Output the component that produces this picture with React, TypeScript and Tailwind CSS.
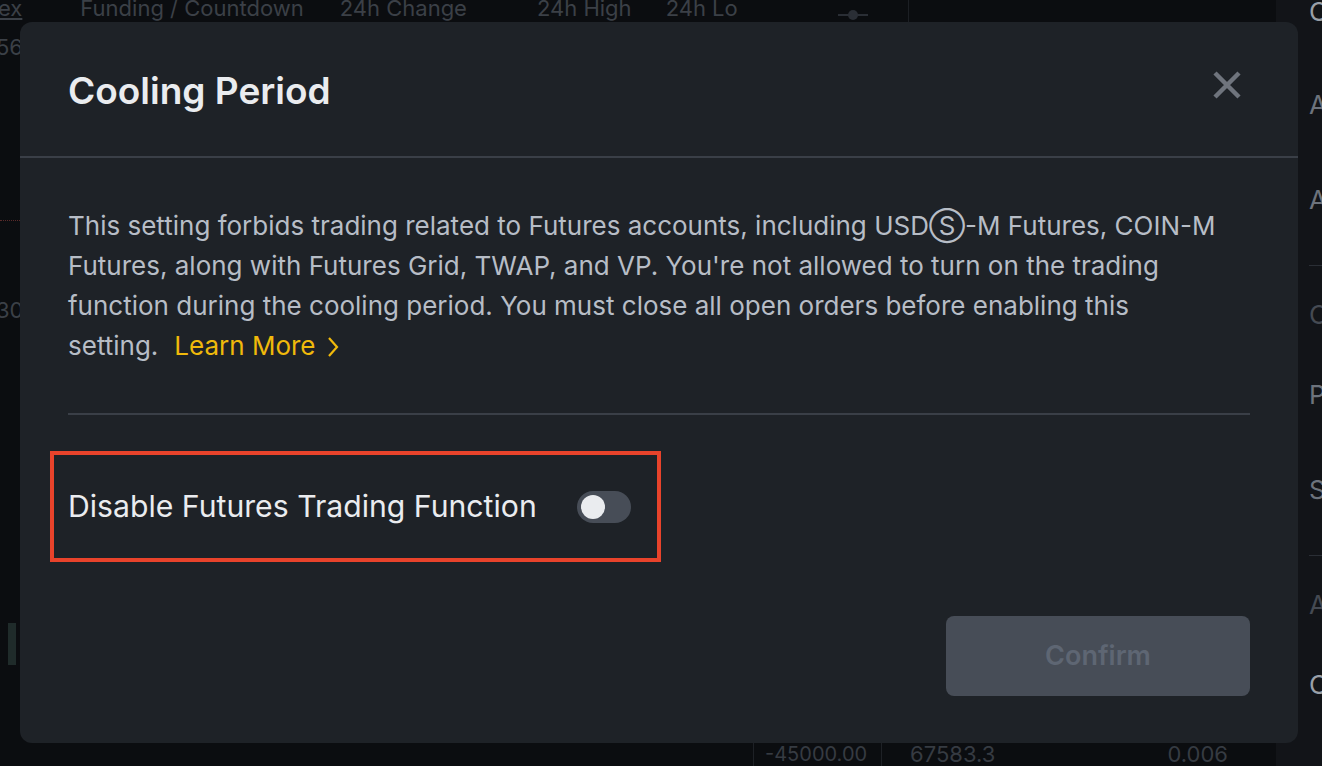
import React from "react";

const font = { fontFamily: "Inter, 'Noto Sans', sans-serif" };

const RightPanel = () => (
  <div className="w-[46px] h-full bg-[#121418] flex flex-col text-[26px] leading-[30px] pl-[33px] overflow-hidden shrink-0">
    <span className="mt-[-3px] text-[#9aa0a8]">C</span>
    <span className="mt-[63px] text-[#6d737c]">A</span>
    <span className="mt-[65px] text-[#6d737c]">A</span>
    <div className="mt-[50px] h-[1px] bg-[#2a2e35]" />
    <span className="mt-[34px] text-[#454a52]">O</span>
    <span className="mt-[50px] text-[#6d737c]">P</span>
    <span className="mt-[65px] text-[#6d737c]">S</span>
    <div className="mt-[50px] h-[1px] bg-[#2a2e35]" />
    <span className="mt-[34px] text-[#454a52]">A</span>
    <span className="mt-[50px] text-[#9aa0a8]">C</span>
  </div>
);

const Background = () => {
  return (
    <div className="flex w-full h-full bg-[#0b0d10] text-[#3b4047]" style={font}>
      <div className="flex flex-col flex-1 min-w-0">
        <div className="flex h-[22px] items-end text-[22px] leading-[22px] overflow-hidden shrink-0">
          <span className="underline -ml-[2px] mb-[3px]">ex</span>
          <span className="ml-[58px] mb-[3px]">Funding / Countdown</span>
          <span className="ml-[36px] mb-[3px]">24h Change</span>
          <span className="ml-[70px] mb-[3px]">24h High</span>
          <span className="ml-[34px] mb-[3px]">24h Lo</span>
          <div className="ml-[100px] w-[30px] h-[2px] bg-[#2a2e35] mb-[6px]" />
          <div className="ml-[-20px] w-[10px] h-[10px] rounded-full bg-[#2a2e35] mb-[2px]" />
          <div className="ml-[50px] w-[1px] h-[22px] bg-[#1c1f24]" />
        </div>
        <div className="flex flex-1 min-h-0 overflow-hidden">
          <div className="w-[20px] flex flex-col text-[22px] leading-[26px] text-[#3b4047]">
            <span className="mt-[12px] -ml-[4px]">561</span>
            <div className="mt-[160px] border-t border-dotted border-[#5a2a2a]" />
            <span className="mt-[76px] -ml-[4px]">30</span>
            <div className="mt-[300px] ml-[8px] w-[8px] h-[42px] bg-[#1f2b2a]" />
          </div>
          <div className="flex-1" />
        </div>
        <div className="flex h-[23px] items-start text-[20px] leading-[22px] text-[#363b42] shrink-0 overflow-hidden">
          <div className="ml-[753px] w-[1px] h-[23px] bg-[#1e2126]" />
          <span className="ml-[11px]">-45000.00</span>
          <div className="ml-[14px] w-[1px] h-[23px] bg-[#1e2126]" />
          <span className="ml-[28px] text-[22px]">67583.3</span>
          <span className="ml-[172px] text-[22px]">0.006</span>
        </div>
      </div>
      <RightPanel />
    </div>
  );
};

const Toggle = () => (
  <div className="w-[54px] h-[32px] rounded-full bg-[#474d57] flex items-center px-[4px]">
    <div className="w-[24px] h-[24px] rounded-full bg-[#eaecef]" />
  </div>
);

const App = () => {
  return (
    <div className="relative w-[1322px] h-[766px] overflow-hidden">
      <Background />
      <div
        className="absolute left-[20px] top-[22px] w-[1278px] h-[721px] rounded-[12px] bg-[#1e2227] flex flex-col"
        style={font}
      >
        <div className="h-[134px] flex items-center justify-between pl-[48px] pr-[56px] shrink-0">
          <div className="text-[37px] font-semibold text-[#eaecef] mt-[4px]">Cooling Period</div>
          <svg width="30" height="30" viewBox="0 0 30 30" className="-mt-[8px]">
            <path d="M3 3 L27 27 M27 3 L3 27" stroke="#6f747d" strokeWidth="4.5" strokeLinecap="butt" />
          </svg>
        </div>
        <div className="h-[2px] bg-[#3a3f47] shrink-0" />
        <div className="px-[48px] flex flex-col flex-1">
          <p className="mt-[48px] text-[26px] leading-[40px] text-[#b7bdc6] whitespace-nowrap">
            This setting forbids trading related to Futures accounts, including USDⓈ-M Futures, COIN-M
            <br />
            Futures, along with Futures Grid, TWAP, and VP. You're not allowed to turn on the trading
            <br />
            function during the cooling period. You must close all open orders before enabling this
            <br />
            setting.
            <span className="ml-[16px] text-[#f0b90b] inline-flex items-center">
              Learn More
              <svg width="14" height="22" viewBox="0 0 14 22" className="ml-[10px] mt-[2px]">
                <path d="M3 2 L11 11 L3 20" stroke="#f0b90b" strokeWidth="2.2" fill="none" />
              </svg>
            </span>
          </p>
          <div className="mt-[47px] h-[2px] bg-[#3a3f47]" />
          <div className="mt-[36px] -ml-[18px] w-[611px] h-[111px] border-[4px] border-[#e8432b] flex items-center pl-[14px]">
            <span className="text-[30.2px] text-[#eaecef]">Disable Futures Trading Function</span>
            <div className="ml-[40px]">
              <Toggle />
            </div>
          </div>
          <div className="mt-auto mb-[47px] flex justify-end">
            <button className="w-[304px] h-[80px] rounded-[8px] bg-[#474d57] text-[27px] font-semibold text-[#5e6673]">
              Confirm
            </button>
          </div>
        </div>
      </div>
    </div>
  );
};

export default App;
